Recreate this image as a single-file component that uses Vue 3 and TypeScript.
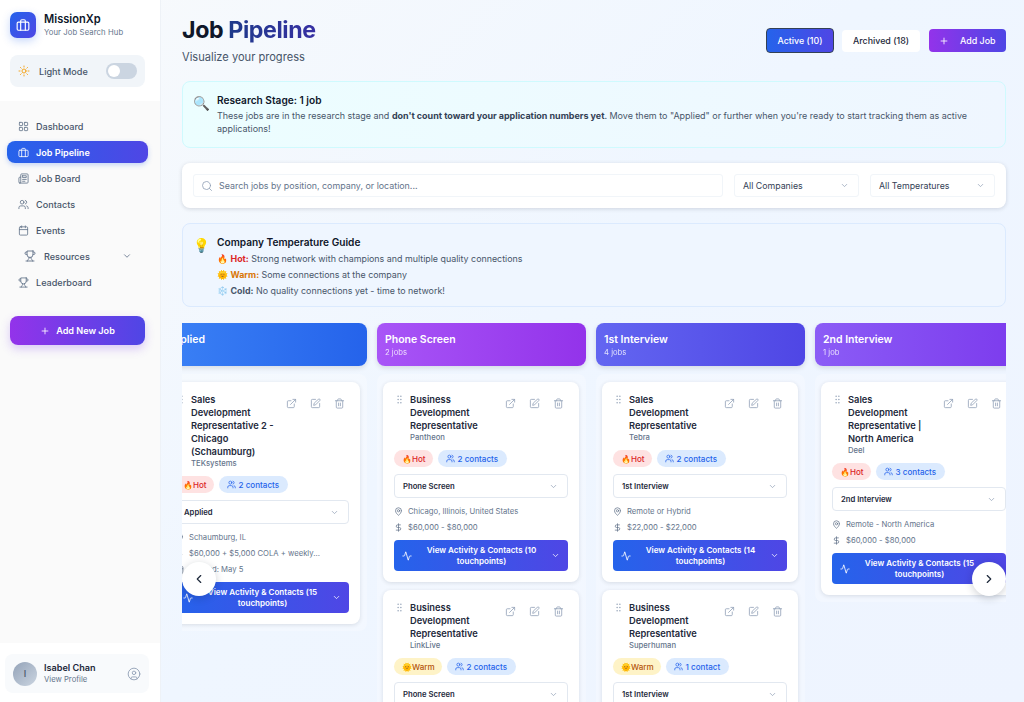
<script setup lang="ts">
interface Card {
  title: string[];
  company: string;
  temp: 'Hot' | 'Warm';
  contacts: string;
  stage: string;
  location: string;
  salary: string;
  applied?: string;
  touch: number;
}
interface Col {
  name: string;
  count: string;
  cls: string;
  cards: Card[];
}
const nav = [
  { label: 'Dashboard', icon: 'grid' },
  { label: 'Job Pipeline', icon: 'brief', active: true },
  { label: 'Job Board', icon: 'board' },
  { label: 'Contacts', icon: 'users' },
  { label: 'Events', icon: 'cal' },
  { label: 'Resources', icon: 'trophy', sub: true },
  { label: 'Leaderboard', icon: 'trophy' },
];
const columns: Col[] = [
  {
    name: 'Applied', count: '1 job', cls: 'h-applied',
    cards: [
      { title: ['Sales', 'Development', 'Representative 2 -', 'Chicago', '(Schaumburg)'], company: 'TEKsystems', temp: 'Hot', contacts: '2 contacts', stage: 'Applied', location: 'Schaumburg, IL', salary: '$60,000 + $5,000 COLA + weekly...', applied: 'Applied: May 5', touch: 15 },
    ],
  },
  {
    name: 'Phone Screen', count: '2 jobs', cls: 'h-phone',
    cards: [
      { title: ['Business', 'Development', 'Representative'], company: 'Pantheon', temp: 'Hot', contacts: '2 contacts', stage: 'Phone Screen', location: 'Chicago, Illinois, United States', salary: '$60,000 - $80,000', touch: 10 },
      { title: ['Business', 'Development', 'Representative'], company: 'LinkLive', temp: 'Warm', contacts: '2 contacts', stage: 'Phone Screen', location: 'Remote', salary: '$60,000 - $80,000', touch: 8 },
    ],
  },
  {
    name: '1st Interview', count: '4 jobs', cls: 'h-first',
    cards: [
      { title: ['Sales', 'Development', 'Representative'], company: 'Tebra', temp: 'Hot', contacts: '2 contacts', stage: '1st Interview', location: 'Remote or Hybrid', salary: '$22,000 - $22,000', touch: 14 },
      { title: ['Business', 'Development', 'Representative'], company: 'Superhuman', temp: 'Warm', contacts: '1 contact', stage: '1st Interview', location: 'Remote', salary: '$60,000 - $80,000', touch: 6 },
    ],
  },
  {
    name: '2nd Interview', count: '1 job', cls: 'h-second',
    cards: [
      { title: ['Sales', 'Development', 'Representative |', 'North America'], company: 'Deel', temp: 'Hot', contacts: '3 contacts', stage: '2nd Interview', location: 'Remote - North America', salary: '$60,000 - $80,000', touch: 15 },
    ],
  },
];
</script>

<template>
  <div class="app">
    <aside class="sidebar">
      <div class="side-top">
        <div class="brand">
          <div class="logo">
            <svg viewBox="0 0 24 24" class="ic14"><rect x="2" y="7" width="20" height="14" rx="2" /><path d="M16 21V5a2 2 0 0 0-2-2h-4a2 2 0 0 0-2 2v16" /></svg>
          </div>
          <div>
            <div class="brand-name">MissionXp</div>
            <div class="brand-sub">Your Job Search Hub</div>
          </div>
        </div>
        <div class="mode">
          <svg viewBox="0 0 24 24" class="sun"><circle cx="12" cy="12" r="4" /><path d="M12 2v2M12 20v2M4.93 4.93l1.41 1.41M17.66 17.66l1.41 1.41M2 12h2M20 12h2M6.34 17.66l-1.41 1.41M19.07 4.93l-1.41 1.41" /></svg>
          <span class="mode-label">Light Mode</span>
          <span class="toggle"><span class="knob"></span></span>
        </div>
      </div>
      <div class="side-mid">
        <nav class="nav">
          <a v-for="n in nav" :key="n.label" class="nav-item" :class="{ active: n.active, sub: n.sub }">
            <svg viewBox="0 0 24 24" class="nav-ic">
              <template v-if="n.icon === 'grid'"><rect x="3" y="3" width="7" height="7" rx="1" /><rect x="14" y="3" width="7" height="7" rx="1" /><rect x="14" y="14" width="7" height="7" rx="1" /><rect x="3" y="14" width="7" height="7" rx="1" /></template>
              <template v-else-if="n.icon === 'brief'"><rect x="2" y="7" width="20" height="14" rx="2" /><path d="M16 21V5a2 2 0 0 0-2-2h-4a2 2 0 0 0-2 2v16" /></template>
              <template v-else-if="n.icon === 'board'"><path d="M4 22h16a2 2 0 0 0 2-2V4a2 2 0 0 0-2-2H8a2 2 0 0 0-2 2v16a2 2 0 0 1-2 2Zm0 0a2 2 0 0 1-2-2v-9c0-1.1.9-2 2-2h2" /><path d="M18 14h-8M15 18h-5" /><path d="M10 6h8v4h-8V6Z" /></template>
              <template v-else-if="n.icon === 'users'"><path d="M16 21v-2a4 4 0 0 0-4-4H6a4 4 0 0 0-4 4v2" /><circle cx="9" cy="7" r="4" /><path d="M22 21v-2a4 4 0 0 0-3-3.87M16 3.13a4 4 0 0 1 0 7.75" /></template>
              <template v-else-if="n.icon === 'cal'"><path d="M8 2v4M16 2v4" /><rect x="3" y="4" width="18" height="18" rx="2" /><path d="M3 10h18" /></template>
              <template v-else><path d="M6 9H4.5a2.5 2.5 0 0 1 0-5H6M18 9h1.5a2.5 2.5 0 0 0 0-5H18M4 22h16M10 14.66V17c0 .55-.47.98-.97 1.21C7.85 18.75 7 20.24 7 22M14 14.66V17c0 .55.47.98.97 1.21C16.15 18.75 17 20.24 17 22" /><path d="M18 2H6v7a6 6 0 0 0 12 0V2Z" /></template>
            </svg>
            <span class="nav-label">{{ n.label }}</span>
            <svg v-if="n.sub" viewBox="0 0 24 24" class="nav-chev"><path d="m6 9 6 6 6-6" /></svg>
          </a>
        </nav>
        <button class="add-new">
          <svg viewBox="0 0 24 24" class="ic10"><path d="M5 12h14M12 5v14" /></svg>
          Add New Job
        </button>
      </div>
      <div class="side-bot">
        <div class="user">
          <div class="avatar">I</div>
          <div class="user-text">
            <div class="user-name">Isabel Chan</div>
            <div class="user-sub">View Profile</div>
          </div>
          <svg viewBox="0 0 24 24" class="user-ic"><circle cx="12" cy="12" r="10" /><circle cx="12" cy="10" r="3" /><path d="M7 20.662V19a2 2 0 0 1 2-2h6a2 2 0 0 1 2 2v1.662" /></svg>
        </div>
      </div>
    </aside>

    <main class="main">
      <header class="head">
        <div>
          <h1 class="title">Job <span class="grad">Pipeline</span></h1>
          <p class="subtitle">Visualize your progress</p>
        </div>
        <div class="head-btns">
          <button class="btn-active">Active (10)</button>
          <button class="btn-arch">Archived (18)</button>
          <button class="btn-add">
            <svg viewBox="0 0 24 24" class="ic10"><path d="M5 12h14M12 5v14" /></svg>
            Add Job
          </button>
        </div>
      </header>

      <section class="research">
        <span class="emoji big">🔍</span>
        <div>
          <div class="box-title">Research Stage: 1 job</div>
          <p class="box-text">These jobs are in the research stage and <b>don't count toward your application numbers yet</b>. Move them to "Applied" or further when you're ready to start tracking them as active applications!</p>
        </div>
      </section>

      <section class="filters">
        <div class="search">
          <svg viewBox="0 0 24 24" class="search-ic"><path d="m21 21-4.34-4.34" /><circle cx="11" cy="11" r="8" /></svg>
          <span>Search jobs by position, company, or location...</span>
        </div>
        <div class="select">All Companies<svg viewBox="0 0 24 24" class="chev"><path d="m6 9 6 6 6-6" /></svg></div>
        <div class="select">All Temperatures<svg viewBox="0 0 24 24" class="chev"><path d="m6 9 6 6 6-6" /></svg></div>
      </section>

      <section class="guide">
        <span class="emoji big">💡</span>
        <div>
          <div class="box-title">Company Temperature Guide</div>
          <div class="guide-line">🔥 <b class="hot">Hot:</b> Strong network with champions and multiple quality connections</div>
          <div class="guide-line">🌞 <b class="warm">Warm:</b> Some connections at the company</div>
          <div class="guide-line">❄️ <b class="cold">Cold:</b> No quality connections yet - time to network!</div>
        </div>
      </section>

      <section class="board">
        <div class="track">
          <div v-for="c in columns" :key="c.name" class="col">
            <div class="col-head" :class="c.cls">
              <div class="col-name">{{ c.name }}</div>
              <div class="col-count">{{ c.count }}</div>
            </div>
            <div class="col-body">
              <article v-for="(j, i) in c.cards" :key="i" class="card">
                <div class="card-top">
                  <svg viewBox="0 0 24 24" class="grip"><circle cx="9" cy="5" r="1.6" /><circle cx="15" cy="5" r="1.6" /><circle cx="9" cy="12" r="1.6" /><circle cx="15" cy="12" r="1.6" /><circle cx="9" cy="19" r="1.6" /><circle cx="15" cy="19" r="1.6" /></svg>
                  <div class="card-title-wrap">
                    <div v-for="t in j.title" :key="t" class="card-title">{{ t }}</div>
                    <div class="company">{{ j.company }}</div>
                  </div>
                  <div class="actions">
                    <svg viewBox="0 0 24 24" class="act"><path d="M15 3h6v6M10 14 21 3M18 13v6a2 2 0 0 1-2 2H5a2 2 0 0 1-2-2V8a2 2 0 0 1 2-2h6" /></svg>
                    <svg viewBox="0 0 24 24" class="act"><path d="M12 3H5a2 2 0 0 0-2 2v14a2 2 0 0 0 2 2h14a2 2 0 0 0 2-2v-7" /><path d="M18.375 2.625a2.121 2.121 0 1 1 3 3L12 15l-4 1 1-4Z" /></svg>
                    <svg viewBox="0 0 24 24" class="act"><path d="M3 6h18M19 6v14a2 2 0 0 1-2 2H7a2 2 0 0 1-2-2V6M8 6V4a2 2 0 0 1 2-2h4a2 2 0 0 1 2 2v2M10 11v6M14 11v6" /></svg>
                  </div>
                </div>
                <div class="tags">
                  <span class="tag" :class="j.temp === 'Hot' ? 'tag-hot' : 'tag-warm'">{{ j.temp === 'Hot' ? '🔥' : '🌞' }}{{ j.temp }}</span>
                  <span class="tag tag-contact">
                    <svg viewBox="0 0 24 24" class="tag-ic"><path d="M16 21v-2a4 4 0 0 0-4-4H6a4 4 0 0 0-4 4v2" /><circle cx="9" cy="7" r="4" /><path d="M22 21v-2a4 4 0 0 0-3-3.87M16 3.13a4 4 0 0 1 0 7.75" /></svg>
                    {{ j.contacts }}
                  </span>
                </div>
                <div class="stage">{{ j.stage }}<svg viewBox="0 0 24 24" class="chev"><path d="m6 9 6 6 6-6" /></svg></div>
                <div class="meta">
                  <svg viewBox="0 0 24 24" class="meta-ic"><path d="M20 10c0 4.993-5.539 10.193-7.399 11.799a1 1 0 0 1-1.202 0C9.539 20.193 4 14.993 4 10a8 8 0 0 1 16 0" /><circle cx="12" cy="10" r="3" /></svg>
                  {{ j.location }}
                </div>
                <div class="meta">
                  <svg viewBox="0 0 24 24" class="meta-ic"><path d="M12 2v20M17 5H9.5a3.5 3.5 0 0 0 0 7h5a3.5 3.5 0 0 1 0 7H6" /></svg>
                  {{ j.salary }}
                </div>
                <div v-if="j.applied" class="meta">
                  <svg viewBox="0 0 24 24" class="meta-ic"><path d="M8 2v4M16 2v4" /><rect x="3" y="4" width="18" height="18" rx="2" /><path d="M3 10h18" /></svg>
                  {{ j.applied }}
                </div>
                <button class="view">
                  <svg viewBox="0 0 24 24" class="ic10"><path d="M22 12h-2.48a2 2 0 0 0-1.93 1.46l-2.35 8.36a.25.25 0 0 1-.48 0L9.24 2.18a.25.25 0 0 0-.48 0l-2.35 8.36A2 2 0 0 1 4.49 12H2" /></svg>
                  <span class="view-text">View Activity &amp; Contacts ({{ j.touch }} touchpoints)</span>
                  <svg viewBox="0 0 24 24" class="ic9"><path d="m6 9 6 6 6-6" /></svg>
                </button>
              </article>
            </div>
          </div>
        </div>
        <button class="arrow left"><svg viewBox="0 0 24 24"><path d="m15 18-6-6 6-6" /></svg></button>
        <button class="arrow right"><svg viewBox="0 0 24 24"><path d="m9 18 6-6-6-6" /></svg></button>
      </section>
    </main>
  </div>
</template>

<style>
html, body { margin: 0; height: 100%; overflow: hidden; }
</style>

<style scoped>
* { box-sizing: border-box; }
svg { fill: none; stroke: currentColor; stroke-width: 2; stroke-linecap: round; stroke-linejoin: round; flex: none; display: block; }
button { font-family: inherit; border: 0; cursor: pointer; }
.app { display: flex; width: 1024px; height: 702px; overflow: hidden; font-family: Inter, "Noto Sans", sans-serif; color: #1e293b; background: linear-gradient(135deg, #f8fafc 0%, #eff6ff 50%, #eef4ff 100%); }
.ic14 { width: 14px; height: 14px; }
.ic10 { width: 10px; height: 10px; }
.ic9 { width: 9px; height: 9px; }

.sidebar { width: 161px; flex: none; height: 702px; display: flex; flex-direction: column; background: #fff; border-right: 1px solid #eef2f7; }
.side-top { height: 101px; padding: 12px 15px 0 10px; background: #fff; }
.brand { display: flex; align-items: center; gap: 8px; }
.logo { width: 26px; height: 26px; border-radius: 7px; background: linear-gradient(135deg, #2563eb, #4f46e5); color: #fff; display: flex; align-items: center; justify-content: center; box-shadow: 0 3px 8px rgba(37, 99, 235, .25); }
.brand-name { font-size: 11.1px; font-weight: 600; color: #0f172a; line-height: 15px; }
.brand-sub { font-size: 7.7px; color: #64748b; line-height: 11px; letter-spacing: .1px; }
.mode { margin-top: 17px; height: 32px; border-radius: 8px; background: #f1f5f9; display: flex; align-items: center; padding: 0 8px; }
.sun { width: 12px; height: 12px; color: #f59e0b; stroke-width: 1.8; }
.mode-label { margin-left: 9px; font-size: 9.1px; font-weight: 500; color: #475569; flex: 1; }
.toggle { width: 31px; height: 16px; border-radius: 8px; background: #cbd5e1; padding: 2px; }
.knob { display: block; width: 12px; height: 12px; border-radius: 50%; background: #fff; }
.side-mid { flex: 1; background: #fafafa; padding: 14px 12px 0 7px; display: flex; flex-direction: column; }
.nav { display: flex; flex-direction: column; gap: 4px; }
.nav-item { height: 22px; border-radius: 8px; display: flex; align-items: center; padding: 0 11px; color: #475569; font-size: 9.1px; font-weight: 500; }
.nav-ic { width: 11px; height: 11px; stroke-width: 1.8; color: #64748b; }
.nav-label { margin-left: 7px; }
.nav-item.active { background: linear-gradient(90deg, #2563eb, #4f46e5); color: #fff; font-weight: 600; box-shadow: 0 2px 5px rgba(37, 99, 235, .25); }
.nav-item.active .nav-ic { color: #fff; }
.nav-item.sub { padding-left: 17px; }
.nav-item.sub .nav-ic { width: 12px; height: 12px; }
.nav-item.sub .nav-label { margin-left: 8px; }
.nav-chev { width: 10px; height: 10px; margin-left: auto; margin-right: 5px; color: #64748b; }
.add-new { margin: 23px 3px 0 3px; height: 29px; border-radius: 8px; background: linear-gradient(90deg, #9333ea, #4f46e5); color: #fff; font-size: 9.1px; font-weight: 600; display: flex; align-items: center; justify-content: center; gap: 6px; box-shadow: 0 4px 10px rgba(124, 58, 237, .25); }
.side-bot { height: 59px; padding: 11px 11px 9px 5px; background: #fff; }
.user { height: 39px; border-radius: 8px; background: #f8fafc; display: flex; align-items: center; padding: 0 8px; }
.avatar { width: 24px; height: 24px; border-radius: 50%; background: linear-gradient(135deg, #94a3b8, #cbd5e1); color: #475569; font-size: 9px; font-weight: 500; display: flex; align-items: center; justify-content: center; }
.user-text { margin-left: 7px; flex: 1; }
.user-name { font-size: 9.1px; font-weight: 600; color: #1e293b; line-height: 12px; }
.user-sub { font-size: 7.7px; color: #64748b; line-height: 11px; }
.user-ic { width: 14px; height: 14px; color: #94a3b8; stroke-width: 1.6; }

.main { flex: 1; min-width: 0; padding: 0 18px 0 21px; overflow: hidden; }
.head { height: 81px; display: flex; justify-content: space-between; padding-top: 16px; }
.title { margin: 0; font-size: 23.2px; line-height: 29px; font-weight: 700; color: #0f172a; letter-spacing: -.4px; }
.grad { background: linear-gradient(90deg, #1e3a8a, #3730a3); -webkit-background-clip: text; background-clip: text; color: transparent; }
.subtitle { margin: 4px 0 0; font-size: 11.1px; line-height: 16px; color: #475569; }
.head-btns { display: flex; align-items: center; gap: 8px; height: 25px; margin-top: 12px; }
.head-btns button { font-size: 8.9px; font-weight: 500; border-radius: 4px; }
.btn-active { width: 68px; height: 25px; background: linear-gradient(90deg, #2563eb, #4f46e5); color: #fff; border: 1px solid #334155 !important; }
.btn-arch { width: 78px; height: 22px; background: #fff; color: #1e293b; }
.btn-add { width: 77px; height: 23px; background: linear-gradient(90deg, #9333ea, #4f46e5); color: #fff; display: flex; align-items: center; padding: 0 0 0 10px; gap: 11px; margin-left: 1px; }

.research { height: 67px; border: 1px solid #cffafe; border-radius: 8px; background: linear-gradient(90deg, #ecfeff, #eff6ff); padding: 11px 11px; display: flex; gap: 9px; }
.emoji.big { font-size: 13.5px; width: 15px; margin-top: 2px; flex: none; line-height: 17px; margin-left: -1px; }
.box-title { font-size: 10.15px; font-weight: 600; color: #0f172a; line-height: 14px; margin-bottom: 2px; }
.box-text { margin: 0; font-size: 8.96px; line-height: 13px; color: #475569; }
.box-text b { font-weight: 700; color: #334155; }
.filters { margin-top: 15px; height: 45px; border-radius: 8px; background: #fff; box-shadow: 0 1px 4px rgba(15, 23, 42, .15); padding: 11px; display: flex; gap: 11px; }
.search { flex: 1; height: 23px; border: 1px solid #f1f5f9; border-radius: 3px; display: flex; align-items: center; padding-left: 7px; gap: 6px; font-size: 8.9px; color: #64748b; }
.search-ic { width: 12px; height: 12px; color: #94a3b8; stroke-width: 1.7; }
.select { width: 125px; height: 23px; border: 1px solid #f1f5f9; border-radius: 3px; display: flex; align-items: center; justify-content: space-between; padding: 0 9px 0 8px; font-size: 8.8px; color: #334155; }
.chev { width: 9px; height: 9px; color: #94a3b8; }
.guide { margin-top: 15px; height: 84px; border: 1px solid #dbeafe; border-radius: 8px; background: #eff6ff; padding: 11px 11px; display: flex; gap: 9px; }
.guide-line { font-size: 8.9px; line-height: 16px; color: #475569; }
.guide-line b { font-weight: 700; }
.hot { color: #dc2626; }
.warm { color: #d97706; }
.cold { color: #475569; }

.board { position: relative; margin-top: 16px; height: 400px; overflow: hidden; }
.track { display: flex; gap: 10px; margin-left: -24px; width: 900px; }
.col { width: 209px; flex: none; }
.col-head { height: 43px; border-radius: 8px; padding: 10px 8px 0; color: #fff; box-shadow: 0 2px 5px rgba(15, 23, 42, .12); }
.h-applied { background: linear-gradient(90deg, #3b82f6, #2563eb); }
.h-phone { background: linear-gradient(90deg, #a855f7, #9333ea); }
.h-first { background: linear-gradient(90deg, #6366f1, #4f46e5); }
.h-second { background: linear-gradient(90deg, #8b5cf6, #7c3aed); }
.col-name { font-size: 10.5px; font-weight: 600; line-height: 14px; }
.col-count { font-size: 7.7px; line-height: 11px; opacity: .8; }
.col-body { margin-top: 8px; padding: 8px 7px 7px 6px; border-radius: 8px; background: rgba(255, 255, 255, .25); display: flex; flex-direction: column; gap: 8px; }
.card { background: #fff; border-radius: 8px; box-shadow: 0 1px 4px rgba(15, 23, 42, .12); padding: 11px 11px 11px; }
.card-top { display: flex; }
.grip { width: 11px; height: 11px; margin: 1px 2px 0 0; fill: #94a3b8; stroke: none; }
.card-title-wrap { width: 86px; margin-left: 3px; flex: none; }
.card-title { font-size: 9.3px; font-weight: 600; line-height: 13px; color: #1e293b; white-space: nowrap; }
.company { font-size: 7.7px; font-weight: 500; line-height: 11px; color: #64748b; }
.actions { display: flex; gap: 13px; margin: 5px 0 0 9px; }
.act { width: 11px; height: 11px; color: #94a3b8; stroke-width: 1.8; }
.tags { display: flex; gap: 5px; margin-top: 7px; }
.tag { height: 17px; border-radius: 9px; display: inline-flex; align-items: center; padding: 0 7px 0 8px; font-size: 8.05px; font-weight: 500; }
.tag-hot { background: #fee2e2; color: #dc2626; }
.tag-warm { background: #fef3c7; color: #b45309; }
.tag-contact { background: #dbeafe; color: #2563eb; gap: 3px; padding: 0 9px 0 8px; }
.tag-ic { width: 9px; height: 9px; }
.stage { margin-top: 7px; height: 24px; border: 1px solid #e2e8f0; border-radius: 4px; display: flex; align-items: center; justify-content: space-between; padding: 0 9px 0 8px; font-size: 7.7px; font-weight: 600; color: #1e293b; }
.meta { display: flex; align-items: center; gap: 5px; margin-top: 5px; height: 11px; font-size: 7.7px; color: #64748b; white-space: nowrap; }
.stage + .meta { margin-top: 8px; }
.meta-ic { width: 9px; height: 9px; color: #64748b; }
.view { width: 100%; height: 31px; margin-top: 7px; border-radius: 4px; background: linear-gradient(90deg, #2563eb, #4f46e5); color: #fff; display: flex; align-items: center; padding: 0 8px; gap: 8px; font-size: 8.05px; font-weight: 600; line-height: 10.5px; }
.view-text { flex: 1; text-align: center; }
.arrow { position: absolute; top: 239px; width: 34px; height: 34px; border-radius: 50%; background: #fff; box-shadow: 0 2px 8px rgba(15, 23, 42, .2); color: #1e293b; display: flex; align-items: center; justify-content: center; padding: 0; }
.arrow svg { width: 14px; height: 14px; }
.arrow.left { left: 0; }
.arrow.right { right: 0; }
</style>
